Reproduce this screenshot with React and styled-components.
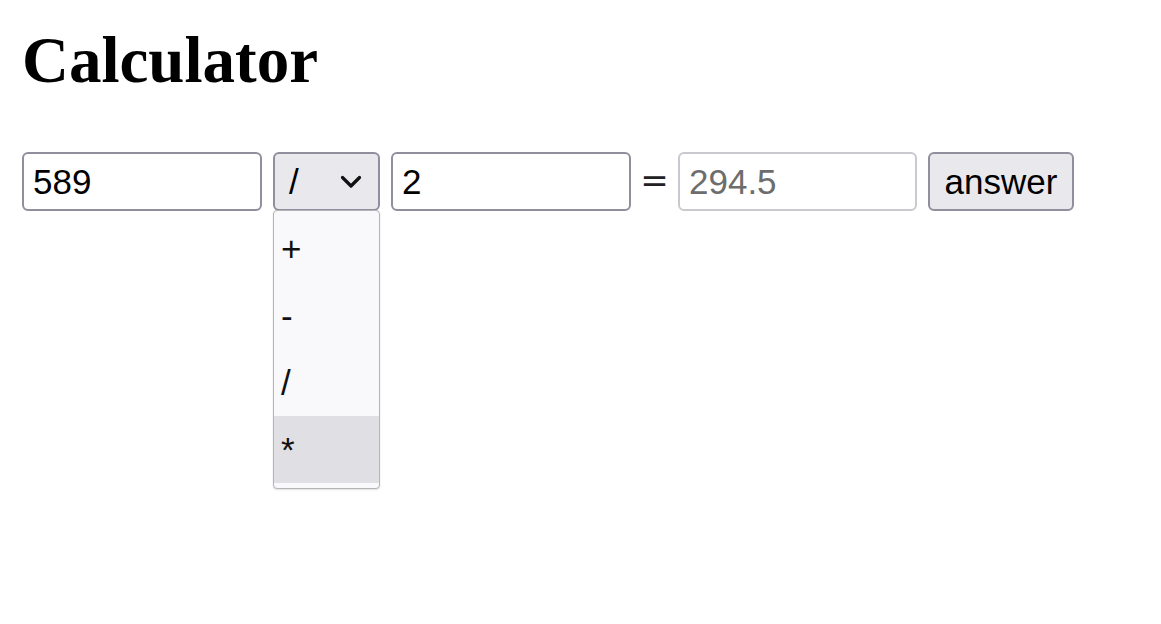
import React from "react";
import styled, { createGlobalStyle } from "styled-components";

const Global = createGlobalStyle`
  html, body { margin: 0; padding: 0; background: #fff; }
  body { font-family: "Liberation Sans", Arial, sans-serif; }
`;

const Page = styled.main`
  box-sizing: border-box;
  min-height: 624px;
  padding: 24px 22px;
`;

const Title = styled.h1`
  margin: 0 0 56px 0;
  font-family: "Liberation Serif", "Times New Roman", serif;
  font-weight: bold;
  font-size: 65px;
  line-height: 72px;
  color: #000;
`;

const Row = styled.div`
  display: flex;
  align-items: center;
  gap: 11px;
`;

const field = `
  box-sizing: border-box;
  height: 59px;
  border: 2px solid #8f8f9d;
  border-radius: 6px;
  font-family: "Liberation Sans", Arial, sans-serif;
  font-size: 35px;
  color: #000;
  outline: none;
`;

const NumberInput = styled.input`
  ${field}
  width: ${(p) => (p.$muted ? "239px" : "240px")};
  padding: 0 7px 0 9px;
  background: #fff;
  border-color: ${(p) => (p.$muted ? "#c9c9cf" : "#8f8f9d")};
  color: ${(p) => (p.$muted ? "#6d6d6d" : "#000")};
`;

const Equals = styled.span`
  font-family: "DejaVu Sans", sans-serif;
  font-size: 34px;
  line-height: 1;
  color: #222;
  width: 25px;
  display: flex;
  justify-content: center;
  margin-top: -3px;
`;

const SelectWrap = styled.div`
  position: relative;
`;

const SelectBox = styled.div`
  ${field}
  width: 107px;
  background: #e9e8ed;
  display: flex;
  align-items: center;
  justify-content: space-between;
  padding: 0 16px 0 14px;
`;

const Chevron = styled.svg`
  width: 22px;
  height: 14px;
  display: block;
`;

const Menu = styled.ul`
  position: absolute;
  top: 58px;
  left: 0;
  width: 107px;
  box-sizing: border-box;
  margin: 0;
  padding: 4px 0 5px;
  list-style: none;
  background: #f9f9fb;
  border: 1px solid #b4b4b9;
  border-radius: 4px;
  box-shadow: 0 1px 2px rgba(0, 0, 0, 0.12);
  z-index: 2;
`;

const Option = styled.li`
  height: 67px;
  display: flex;
  align-items: center;
  padding-left: 7px;
  font-size: 35px;
  color: #111;
  background: ${(p) => (p.$active ? "#e0dfe4" : "transparent")};
`;

const Button = styled.button`
  ${field}
  width: 146px;
  background: #e9e8ed;
  padding: 0 12px;
  cursor: pointer;
`;

export default function App() {
  const ops = ["+", "-", "/", "*"];
  return (
    <>
      <Global />
      <Page>
        <Title>Calculator</Title>
        <Row>
          <NumberInput defaultValue="589" />
          <SelectWrap>
            <SelectBox>
              <span>/</span>
              <Chevron viewBox="0 0 22 14">
                <path d="M2.5 2.5 L11 11 L19.5 2.5" fill="none" stroke="#111" strokeWidth="3.2" strokeLinecap="round" strokeLinejoin="round" />
              </Chevron>
            </SelectBox>
            <Menu>
              {ops.map((o) => (
                <Option key={o} $active={o === "*"}>{o}</Option>
              ))}
            </Menu>
          </SelectWrap>
          <NumberInput defaultValue="2" />
          <Equals>=</Equals>
          <NumberInput $muted readOnly defaultValue="294.5" />
          <Button>answer</Button>
        </Row>
      </Page>
    </>
  );
}
